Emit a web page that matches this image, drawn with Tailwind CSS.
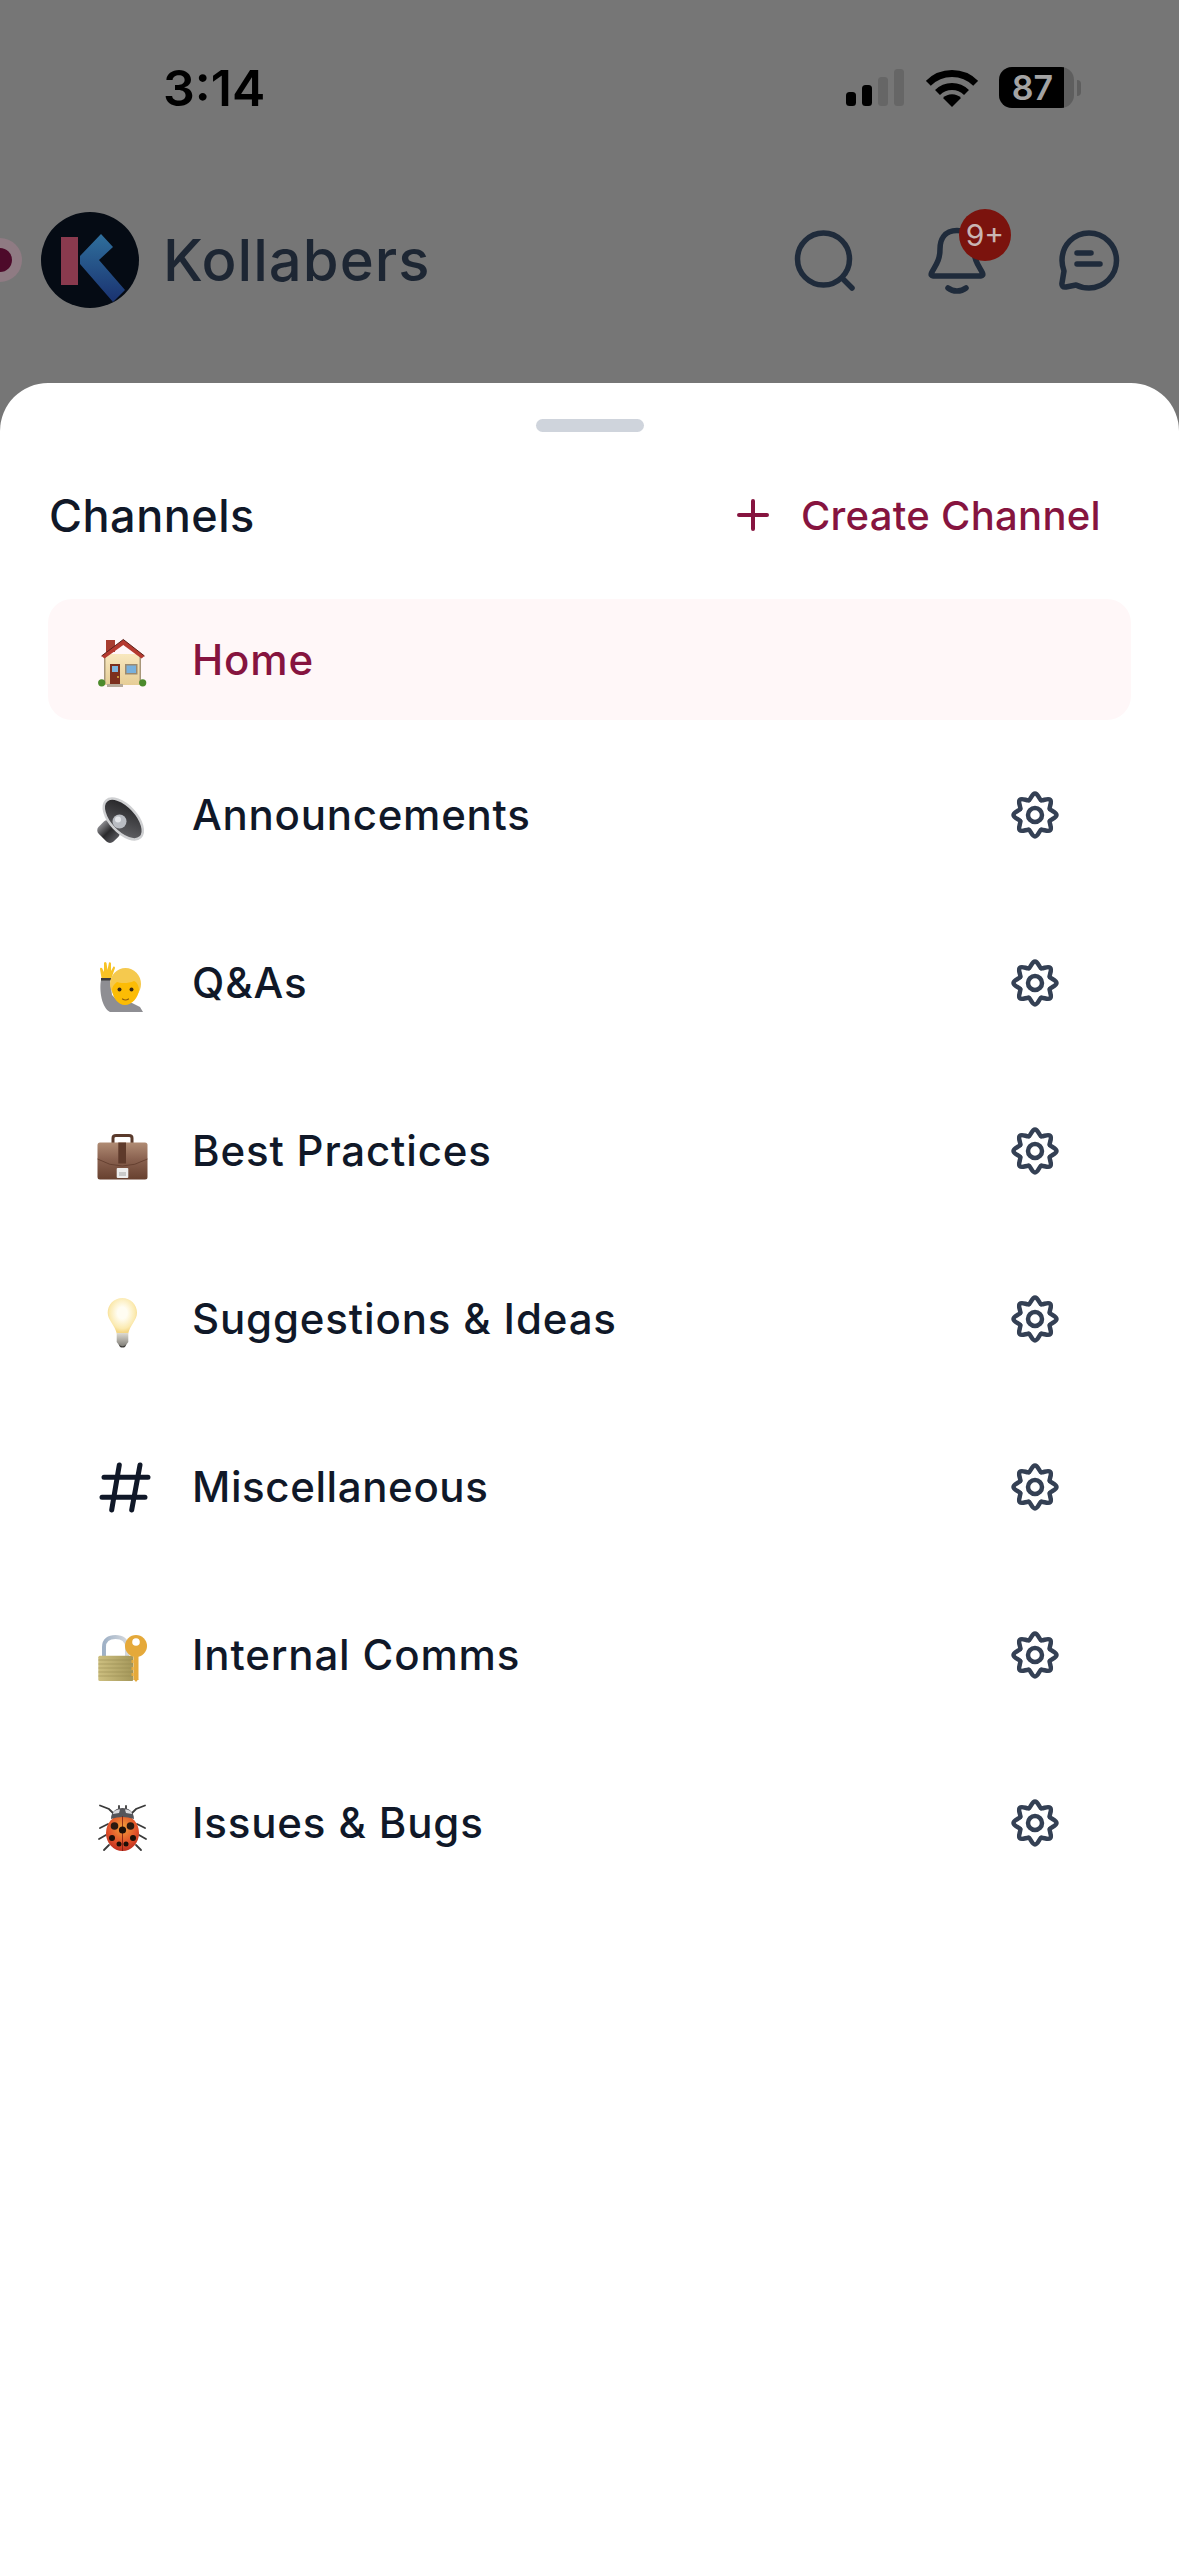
<!DOCTYPE html>
<html>
<head>
<meta charset="utf-8">
<script src="https://cdn.jsdelivr.net/npm/@tailwindcss/browser@4"></script>
</head>
<body class="m-0">
<svg class="absolute w-0 h-0" aria-hidden="true">
  <defs>
    <symbol id="gear" viewBox="0 0 48 48">
      <g fill="none" stroke="#344054" stroke-width="4.5" stroke-linecap="round">
        <path id="lobe" d="M17.9 9.2C19.7 8.400 21 2.500 24 2.500S28.300 8.400 30.100 9.200"/>
        <use href="#lobe" transform="rotate(45 24 24)"/>
        <use href="#lobe" transform="rotate(90 24 24)"/>
        <use href="#lobe" transform="rotate(135 24 24)"/>
        <use href="#lobe" transform="rotate(180 24 24)"/>
        <use href="#lobe" transform="rotate(225 24 24)"/>
        <use href="#lobe" transform="rotate(270 24 24)"/>
        <use href="#lobe" transform="rotate(315 24 24)"/>
        <circle cx="24" cy="24" r="7"/>
      </g>
    </symbol>
    <linearGradient id="wall" x1="0" y1="0" x2="0" y2="1"><stop offset="0" stop-color="#f8e8bf"/><stop offset="1" stop-color="#e6cd96"/></linearGradient>
    <linearGradient id="cone" x1="0" y1="0" x2="1" y2="1"><stop offset="0" stop-color="#1c1c1e"/><stop offset="1" stop-color="#6a6a6e"/></linearGradient>
    <linearGradient id="mag" x1="0" y1="0" x2="1" y2="0"><stop offset="0" stop-color="#8a8a8e"/><stop offset="0.5" stop-color="#2a2a2c"/><stop offset="1" stop-color="#55555a"/></linearGradient>
    <linearGradient id="case" x1="0" y1="0" x2="0" y2="1"><stop offset="0" stop-color="#b08c74"/><stop offset="0.45" stop-color="#8a6250"/><stop offset="1" stop-color="#67402f"/></linearGradient>
    <radialGradient id="bulb" cx="0.5" cy="0.42" r="0.55"><stop offset="0.3" stop-color="#fffdf2"/><stop offset="0.8" stop-color="#fbeab0"/><stop offset="1" stop-color="#f4d684"/></radialGradient>
    <linearGradient id="base" x1="0" y1="0" x2="0" y2="1"><stop offset="0" stop-color="#dedbd2"/><stop offset="1" stop-color="#7c7a74"/></linearGradient>
    <linearGradient id="lockb" x1="0" y1="0" x2="1" y2="0"><stop offset="0" stop-color="#cdbf80"/><stop offset="1" stop-color="#a4975a"/></linearGradient>
    <linearGradient id="shack" x1="0" y1="0" x2="1" y2="0"><stop offset="0" stop-color="#9fb1c6"/><stop offset="1" stop-color="#d5d9de"/></linearGradient>
    <radialGradient id="bug" cx="0.5" cy="0.35" r="0.7"><stop offset="0" stop-color="#f2a13a"/><stop offset="0.6" stop-color="#e2532a"/><stop offset="1" stop-color="#b8281c"/></radialGradient>
    <linearGradient id="kblue" x1="0" y1="0" x2="0" y2="1"><stop offset="0" stop-color="#2f6f9c"/><stop offset="1" stop-color="#1a3270"/></linearGradient>
  </defs>
</svg>

<div class="relative flex h-[2556px] w-[1179px] flex-col overflow-hidden bg-[#767676] font-['Inter',sans-serif]">
  <!-- status bar -->
  <div class="mt-[67px] flex h-[41px] items-center pl-[163px] pr-[98px]">
    <span class="text-[50px] leading-none font-semibold text-black">3:14</span>
    <div class="ml-auto flex items-center">
      <svg class="h-[37px] w-[58px]" viewBox="0 0 58 37">
        <rect x="0" y="23" width="10" height="14" rx="3.5" fill="#000"/>
        <rect x="16" y="16" width="10" height="21" rx="3.5" fill="#000"/>
        <rect x="32" y="8" width="10" height="29" rx="3.5" fill="#666"/>
        <rect x="48" y="0" width="10" height="37" rx="3.5" fill="#666"/>
      </svg>
      <svg class="ml-[22px] h-[38px] w-[52px]" viewBox="0 0 52 38" fill="none" stroke="#000" stroke-width="7">
        <path d="M2.3 14.3A33.5 33.5 0 0 1 49.7 14.3"/>
        <path d="M11.5 23.5A20.5 20.5 0 0 1 40.5 23.5"/>
        <path d="M26 38L17 29A12.7 12.7 0 0 1 35 29Z" fill="#000" stroke="none"/>
      </svg>
      <div class="ml-[21px] flex h-[41px] w-[75px] overflow-hidden rounded-[13px] bg-[#5e5e5e]">
        <div class="flex h-full w-[65px] items-center justify-center bg-black pl-[2px]">
          <span class="text-[34px] leading-none font-semibold text-[#a3a3a3]">87</span>
        </div>
      </div>
      <div class="ml-[3px] h-[16px] w-[4px] rounded-r-full bg-[#5e5e5e]"></div>
    </div>
  </div>

  <!-- app header -->
  <div class="mt-[104px] flex h-[96px] items-center pr-[55px]">
    <div class="-ml-[22px] flex h-[44px] w-[44px] items-center justify-center rounded-full bg-[#8f7b83]">
      <div class="h-[24px] w-[24px] rounded-full bg-[#4d0a2a]"></div>
    </div>
    <svg class="ml-[19px] h-[96px] w-[98px]" viewBox="0 0 98 96">
      <ellipse cx="49" cy="48" rx="49" ry="48" fill="#050b14"/>
      <rect x="20" y="25" width="17" height="48" fill="#8a3a4e"/>
      <path d="M60 22L72 35L58 48L84 78L72 90L39 52V44Z" fill="url(#kblue)"/>
    </svg>
    <span class="ml-[24px] text-[58px] leading-none font-medium text-[#1d2633] tracking-[1px]">Kollabers</span>
    <svg class="ml-auto h-[70px] w-[70px]" viewBox="0 0 70 70" fill="none" stroke="#1f2b3b" stroke-width="5.5" stroke-linecap="round">
      <circle cx="33.5" cy="34" r="26"/>
      <path d="M53 54L62 63"/>
    </svg>
    <div class="relative ml-[62px] h-[70px] w-[70px]">
      <svg class="h-[70px] w-[70px]" viewBox="0 0 70 70" fill="none" stroke="#1f2b3b" stroke-width="5.5" stroke-linecap="round" stroke-linejoin="round">
        <path d="M35 5.5C22 5.5 18 15 18 24C18 36 13 41 9.5 48C8.7 50 9.5 51 11 51H59C60.5 51 61.3 50 60.5 48C57 41 52 36 52 24C52 15 48 5.5 35 5.5Z"/>
        <path d="M26 63C31 67 39 67 44 63"/>
      </svg>
      <div class="absolute left-[37px] top-[-16px] flex h-[52px] w-[52px] items-center justify-center rounded-full bg-[#7b130d]">
        <span class="text-[30px] leading-none font-normal text-[#c9b5b3]">9+</span>
      </div>
    </div>
    <svg class="ml-[62px] h-[70px] w-[70px]" viewBox="0 0 70 70" fill="none" stroke="#1f2b3b" stroke-width="5.5" stroke-linecap="round" stroke-linejoin="round">
      <path d="M35 8C20 8 8 20 8 35.5C8 40 9 43 10 46L8 58C7.5 61 9 62.5 12 62L22 60C26 62 30 63 35 63C50 63 62.5 50.5 62.5 35.5C62.5 20 50 8 35 8Z"/>
      <path d="M23 28H37M23 39H46"/>
    </svg>
  </div>

  <!-- bottom sheet -->
  <div class="mt-[75px] flex flex-1 flex-col rounded-t-[48px] bg-white">
    <div class="mx-auto mt-[36px] h-[13px] w-[108px] rounded-full bg-[#cfd4dc]"></div>
    <div class="mt-[50px] flex h-[66px] items-center pl-[49px] pr-[78px]">
      <span class="text-[45px] leading-none font-medium text-[#101828] tracking-[0.5px]">Channels</span>
      <svg class="ml-auto h-[32px] w-[32px]" viewBox="0 0 32 32" fill="none" stroke="#86143f" stroke-width="4" stroke-linecap="round">
        <path d="M16 2V30M2 16H30"/>
      </svg>
      <span class="ml-[32px] mt-[2px] text-[40px] leading-none font-medium text-[#86143f] tracking-[0.3px]">Create Channel</span>
    </div>

    <!-- channels -->
    <div class="mx-[48px] mt-[51px] flex h-[121px] items-center rounded-[24px] bg-[#fff7f8] pl-[44px]">
      <svg class="h-[60px] w-[60px] shrink-0" viewBox="0 0 60 60">
        <rect x="14" y="10" width="9" height="12" fill="#a83d30"/>
        <rect x="12" y="24" width="37" height="31" fill="url(#wall)"/>
        <rect x="12" y="26" width="1.5" height="28" fill="#a8977a"/>
        <rect x="47.5" y="26" width="1.5" height="28" fill="#a8977a"/>
        <path d="M9.5 26L31.3 9.5L52.5 26L49.5 28.5L31.3 15L12.5 28.5Z" fill="#b53a30"/>
        <path d="M9.5 26L31.3 9.5L52.5 26" fill="none" stroke="#5b2019" stroke-width="1"/>
        <rect x="18" y="34" width="10" height="20" fill="#7c2f1e"/>
        <rect x="20" y="36" width="6" height="6" fill="#7db4de"/>
        <circle cx="26" cy="47" r="0.9" fill="#e8c14a"/>
        <rect x="33" y="34" width="12.5" height="10.5" fill="#9a8a70"/>
        <rect x="34.5" y="35.5" width="9.5" height="7.5" fill="#78b0dc"/>
        <rect x="15" y="54" width="16" height="3" fill="#b5a99a"/>
        <circle cx="9.7" cy="52.8" r="3.6" fill="#4c8a2c"/>
        <circle cx="50.7" cy="52.8" r="3.6" fill="#4c8a2c"/>
      </svg>
      <span class="ml-[40px] text-[42px] leading-none font-medium text-[#86143f] tracking-[0.85px]">Home</span>
    </div>

    <div class="mx-[48px] mt-[11px] flex h-[168px] items-center pl-[44px] pr-[72px]">
      <svg class="h-[60px] w-[60px] shrink-0" viewBox="0 0 60 60">
        <g transform="rotate(45 16.3 46.7)"><rect x="6" y="38" width="21" height="17" rx="5" fill="url(#mag)"/></g>
        <ellipse cx="31.3" cy="34" rx="25" ry="13" transform="rotate(47 31.3 34)" fill="url(#cone)" stroke="#cfd0d2" stroke-width="2.5"/>
        <circle cx="27.5" cy="36.5" r="7" fill="#b9bcc2"/>
        <circle cx="26" cy="34.5" r="3" fill="#e4e6ea"/>
      </svg>
      <span class="ml-[40px] text-[42px] leading-none font-medium text-[#101828] tracking-[0.75px]">Announcements</span>
      <svg class="ml-auto h-[48px] w-[48px]"><use href="#gear"/></svg>
    </div>

    <div class="mx-[48px] flex h-[168px] items-center pl-[44px] pr-[72px]">
      <svg class="h-[60px] w-[60px] shrink-0" viewBox="0 0 60 60">
        <path d="M9 27L18 27L20 42L28 50L40 50L48 54L51 59H18C10 55 7 38 9 27Z" fill="#8e8e93"/>
        <path d="M9.500 25L8 16Q8 14 10 15L12 19L12 10Q13 8 14.500 10L15.500 17L17 9.500Q18.500 8.500 19 10.500L19 18L21.500 13.500Q23 13 23 15L19.500 25Z" fill="#f7c325"/>
        <rect x="9" y="25" width="10.500" height="2.500" fill="#3b3b3b"/>
        <ellipse cx="33.500" cy="31" rx="15.500" ry="16" fill="#f5c94e"/>
        <path d="M20 37C21 45 26 52 33 52C40 52 46 45 47 37C47 33 45 29 42 28C36 31 27 30 25 29C22 31 20 34 20 37Z" fill="#fcbc05"/>
        <circle cx="27.500" cy="36.500" r="2" fill="#3b2a14"/>
        <circle cx="39.500" cy="36.500" r="2" fill="#3b2a14"/>
        <path d="M30.500 46Q33.500 48 36.500 46" stroke="#8a5a10" stroke-width="1.200" fill="none" stroke-linecap="round"/>
      </svg>
      <span class="ml-[40px] text-[42px] leading-none font-medium text-[#101828] tracking-[0.85px]">Q&amp;As</span>
      <svg class="ml-auto h-[48px] w-[48px]"><use href="#gear"/></svg>
    </div>

    <div class="mx-[48px] flex h-[168px] items-center pl-[44px] pr-[72px]">
      <svg class="h-[60px] w-[60px] shrink-0" viewBox="0 0 60 60">
        <path d="M21 22V17Q21 14.500 24 14.500H37Q40 14.500 40 17V22" fill="none" stroke="#5a3a2c" stroke-width="3"/>
        <rect x="5.500" y="21.500" width="50" height="37" rx="2.500" fill="url(#case)"/>
        <rect x="26.300" y="21.500" width="7.700" height="21" fill="#5e3a2b"/>
        <path d="M5.500 38Q30 52 55.500 38" fill="none" stroke="#5e3a2b" stroke-width="0.800"/>
        <rect x="24.700" y="47" width="11.600" height="10" rx="1" fill="#eeeeee"/>
        <rect x="27" y="51" width="7" height="4" fill="#c9c9c9"/>
      </svg>
      <span class="ml-[40px] text-[42px] leading-none font-medium text-[#101828] tracking-[0.85px]">Best Practices</span>
      <svg class="ml-auto h-[48px] w-[48px]"><use href="#gear"/></svg>
    </div>

    <div class="mx-[48px] flex h-[168px] items-center pl-[44px] pr-[72px]">
      <svg class="h-[60px] w-[60px] shrink-0" viewBox="0 0 60 60">
        <path d="M30.300 9C38.500 9 45 15.500 45 23.700C45 31 38 36 36.300 44.500H24.700C23 36 15.700 31 15.700 23.700C15.700 15.500 22 9 30.300 9Z" fill="url(#bulb)"/>
        <path d="M24.700 44H36.300V53Q33 58 30.500 58Q28 58 24.700 53Z" fill="url(#base)"/>
        <path d="M26.500 55Q30.500 59.500 34.500 55L33 58Q30.500 59 28 58Z" fill="#3f3d3a"/>
      </svg>
      <span class="ml-[40px] text-[42px] leading-none font-medium text-[#101828] tracking-[0.85px]">Suggestions &amp; Ideas</span>
      <svg class="ml-auto h-[48px] w-[48px]"><use href="#gear"/></svg>
    </div>

    <div class="mx-[48px] flex h-[168px] items-center pl-[44px] pr-[72px]">
      <svg class="h-[60px] w-[60px] shrink-0" viewBox="0 0 60 60" fill="none" stroke="#101828" stroke-width="5" stroke-linecap="round">
        <path d="M12 20.300H56M10 40.300H53M27.300 8L19.700 53M48 8L39.700 53"/>
      </svg>
      <span class="ml-[40px] text-[42px] leading-none font-medium text-[#101828] tracking-[0.6px]">Miscellaneous</span>
      <svg class="ml-auto h-[48px] w-[48px]"><use href="#gear"/></svg>
    </div>

    <div class="mx-[48px] flex h-[168px] items-center pl-[44px] pr-[72px]">
      <svg class="h-[60px] w-[60px] shrink-0" viewBox="0 0 60 60">
        <path d="M12 31V22C12 15 17 12 23.500 12C30 12 35 15 35 22V31" fill="none" stroke="url(#shack)" stroke-width="4"/>
        <rect x="6.300" y="30.700" width="35" height="25.300" rx="1.500" fill="url(#lockb)"/>
        <path d="M6.300 35H41M6.300 39H41M6.300 43H41M6.300 47H41M6.300 51H41" stroke="#93874e" stroke-width="0.500"/>
        <rect x="41.500" y="28" width="5" height="27" fill="#e5a93a"/>
        <path d="M41.500 54L44 57L46.500 54Z" fill="#e5a93a"/>
        <path d="M41.500 35H39.500V38H41.500M41.500 42H39.500V45H41.500M41.500 48H39.500V51H41.500" fill="#e5a93a"/>
        <circle cx="44" cy="21" r="11" fill="#e5a93a"/>
        <circle cx="44" cy="17" r="3.800" fill="#fff"/>
      </svg>
      <span class="ml-[40px] text-[42px] leading-none font-medium text-[#101828] tracking-[0.85px]">Internal Comms</span>
      <svg class="ml-auto h-[48px] w-[48px]"><use href="#gear"/></svg>
    </div>

    <div class="mx-[48px] flex h-[168px] items-center pl-[44px] pr-[72px]">
      <svg class="h-[60px] w-[60px] shrink-0" viewBox="0 0 60 60">
        <g fill="none" stroke="#3a3a3a" stroke-width="1.800" stroke-linecap="round">
          <path d="M22 21L17 16L8 12.500M39 21L44 16L53 12.500M16 31L8 35M45 31L53 35M14 42L7 46M47 42L54 46M17 52L12 57M44 52L49 57M27 16V13M34 16V13"/>
        </g>
        <ellipse cx="30.500" cy="40" rx="16.500" ry="18" fill="url(#bug)"/>
        <path d="M19 26C19 18 25 15 30.500 15C36 15 42 18 42 26Q30.500 22 19 26Z" fill="#55555a"/>
        <path d="M33 16.500C38 16.500 40 19 40 21L34 20Z" fill="#d9d9dc"/>
        <path d="M28 16.500C23 16.500 21 19 21 21L27 20Z" fill="#d9d9dc"/>
        <path d="M30.500 23V58" stroke="#7a1a12" stroke-width="0.800"/>
        <circle cx="22.500" cy="33" r="3.800" fill="#2c1a10"/>
        <circle cx="38.500" cy="33" r="3.800" fill="#2c1a10"/>
        <circle cx="30.500" cy="37" r="3.600" fill="#1c0f08"/>
        <circle cx="20" cy="45" r="3" fill="#1c0f08"/>
        <circle cx="41" cy="45" r="3" fill="#1c0f08"/>
        <circle cx="27" cy="51" r="2.500" fill="#1c0f08"/>
        <circle cx="34" cy="51" r="2.500" fill="#1c0f08"/>
      </svg>
      <span class="ml-[40px] text-[42px] leading-none font-medium text-[#101828] tracking-[0.85px]">Issues &amp; Bugs</span>
      <svg class="ml-auto h-[48px] w-[48px]"><use href="#gear"/></svg>
    </div>
  </div>
</div>
</body>
</html>
